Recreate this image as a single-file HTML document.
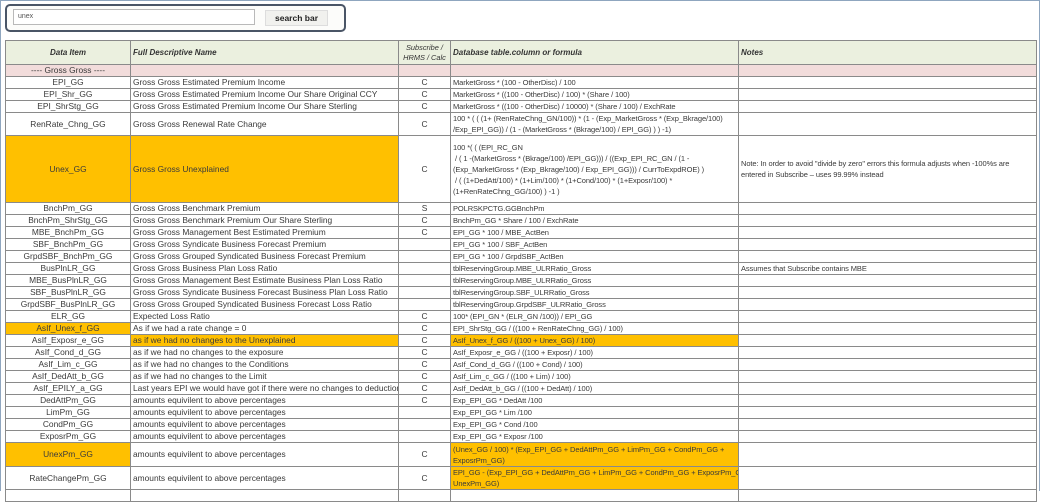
<!DOCTYPE html>
<html><head><meta charset="utf-8"><style>
*{margin:0;padding:0;box-sizing:border-box}
body{width:1040px;height:491px;overflow:hidden;background:#fff;font-family:"Liberation Sans",sans-serif;color:#3a3a3a;position:relative}
.frame{position:absolute;left:0;top:0;width:1040px;height:491px;border:1px solid #8fa6bf;border-bottom:none}
.sb{position:absolute;left:5px;top:4px;width:341px;height:28px;border:2px solid #4a5566;border-radius:5px;background:#fcfcfa}
.inp{position:absolute;left:6px;top:3px;width:242px;height:16px;border:1px solid #b9b9b9;background:#fff;font-size:7px;padding:3px 4px;color:#555}
.btn{position:absolute;left:258px;top:4px;width:63px;height:16px;background:#f1f1ee;border:1px solid #ddd;font-size:8.5px;font-weight:bold;text-align:center;line-height:14px;color:#222}
table{position:absolute;left:5px;top:40px;width:1031px;border-collapse:collapse;table-layout:fixed;font-size:8.4px}
td{border:1px solid #8a8a8a;padding:0 2px;vertical-align:middle;white-space:nowrap;overflow:hidden;height:12px;line-height:11px}
td.c{text-align:center}
td.f{font-size:7.5px;letter-spacing:-0.1px}
tr.h td{background:#ebf0df;font-weight:bold;font-style:italic;height:24px;color:#333;font-size:8px}
tr.g td{background:#f2dcdb}
.o{background:#ffc000}
td.w{line-height:11px}
</style></head><body>
<div class="frame"></div>
<div class="sb"><div class="inp">unex</div><div class="btn">search bar</div></div>
<table>
<colgroup><col style="width:125px"><col style="width:268px"><col style="width:52px"><col style="width:288px"><col style="width:298px"></colgroup>
<tr class="h"><td class="c">Data Item</td><td>Full Descriptive Name</td><td class="c" style="font-weight:normal;line-height:10px;font-size:7.4px">Subscribe /<br>HRMS / Calc</td><td>Database table.column or formula</td><td>Notes</td></tr>
<tr class="g"><td class="c">---- Gross Gross ----</td><td></td><td></td><td></td><td></td></tr>
<tr><td class="c">EPI_GG</td><td>Gross Gross Estimated Premium Income</td><td class="c">C</td><td class="f">MarketGross * (100 - OtherDisc)  / 100</td><td></td></tr>
<tr><td class="c">EPI_Shr_GG</td><td>Gross Gross Estimated Premium Income Our Share Original CCY</td><td class="c">C</td><td class="f">MarketGross * ((100 - OtherDisc) / 100) * (Share / 100)</td><td></td></tr>
<tr><td class="c">EPI_ShrStg_GG</td><td>Gross Gross Estimated Premium Income Our Share Sterling</td><td class="c">C</td><td class="f">MarketGross * ((100 - OtherDisc) / 10000) * (Share / 100) / ExchRate</td><td></td></tr>
<tr><td class="c" style="height:23px">RenRate_Chng_GG</td><td>Gross Gross Renewal Rate Change</td><td class="c">C</td><td class="f w">100 * ( ( (1+ (RenRateChng_GN/100)) * (1 - (Exp_MarketGross * (Exp_Bkrage/100)<br>/Exp_EPI_GG)) / (1 - (MarketGross * (Bkrage/100) / EPI_GG) ) ) -1)</td><td></td></tr>
<tr><td class="c o" style="height:67px">Unex_GG</td><td class="o">Gross Gross Unexplained</td><td class="c">C</td><td class="f w">100 *( ( (EPI_RC_GN<br>&nbsp;/ ( 1 -(MarketGross * (Bkrage/100) /EPI_GG))) / ((Exp_EPI_RC_GN / (1 -<br>(Exp_MarketGross * (Exp_Bkrage/100) / Exp_EPI_GG))) / CurrToExpdROE) )<br>&nbsp;/ ( (1+DedAtt/100) * (1+Lim/100) * (1+Cond/100) * (1+Exposr/100) *<br>(1+RenRateChng_GG/100) )  -1 )</td><td class="f w">Note: In order to avoid "divide by zero" errors this formula adjusts when -100%s are<br>entered in Subscribe – uses 99.99% instead</td></tr>
<tr><td class="c">BnchPm_GG</td><td>Gross Gross Benchmark Premium</td><td class="c">S</td><td class="f">POLRSKPCTG.GGBnchPm</td><td></td></tr>
<tr><td class="c">BnchPm_ShrStg_GG</td><td>Gross Gross Benchmark Premium Our Share Sterling</td><td class="c">C</td><td class="f">BnchPm_GG * Share / 100 / ExchRate</td><td></td></tr>
<tr><td class="c">MBE_BnchPm_GG</td><td>Gross Gross Management Best Estimated Premium</td><td class="c">C</td><td class="f">EPI_GG * 100 / MBE_ActBen</td><td></td></tr>
<tr><td class="c">SBF_BnchPm_GG</td><td>Gross Gross Syndicate Business Forecast Premium</td><td></td><td class="f">EPI_GG * 100 / SBF_ActBen</td><td></td></tr>
<tr><td class="c">GrpdSBF_BnchPm_GG</td><td>Gross Gross Grouped Syndicated Business Forecast Premium</td><td></td><td class="f">EPI_GG * 100 / GrpdSBF_ActBen</td><td></td></tr>
<tr><td class="c">BusPlnLR_GG</td><td>Gross Gross Business Plan Loss Ratio</td><td></td><td class="f">tblReservingGroup.MBE_ULRRatio_Gross</td><td class="f">Assumes that Subscribe contains MBE</td></tr>
<tr><td class="c">MBE_BusPlnLR_GG</td><td>Gross Gross Management Best Estimate Business Plan Loss Ratio</td><td></td><td class="f">tblReservingGroup.MBE_ULRRatio_Gross</td><td></td></tr>
<tr><td class="c">SBF_BusPlnLR_GG</td><td>Gross Gross Syndicate Business Forecast Business Plan Loss Ratio</td><td></td><td class="f">tblReservingGroup.SBF_ULRRatio_Gross</td><td></td></tr>
<tr><td class="c">GrpdSBF_BusPlnLR_GG</td><td>Gross Gross Grouped Syndicated Business Forecast Loss Ratio</td><td></td><td class="f">tblReservingGroup.GrpdSBF_ULRRatio_Gross</td><td></td></tr>
<tr><td class="c">ELR_GG</td><td>Expected Loss Ratio</td><td class="c">C</td><td class="f">100* (EPI_GN * (ELR_GN /100)) / EPI_GG</td><td></td></tr>
<tr><td class="c o">AsIf_Unex_f_GG</td><td>As if we had a rate change = 0</td><td class="c">C</td><td class="f">EPI_ShrStg_GG /  ((100 + RenRateChng_GG) / 100)</td><td></td></tr>
<tr><td class="c">AsIf_Exposr_e_GG</td><td class="o">as if we had no changes to the Unexplained</td><td class="c">C</td><td class="f o">AsIf_Unex_f_GG / ((100 + Unex_GG) / 100)</td><td></td></tr>
<tr><td class="c">AsIf_Cond_d_GG</td><td>as if we had no changes to the exposure</td><td class="c">C</td><td class="f">AsIf_Exposr_e_GG / ((100 + Exposr) / 100)</td><td></td></tr>
<tr><td class="c">AsIf_Lim_c_GG</td><td>as if we had no changes to the Conditions</td><td class="c">C</td><td class="f">AsIf_Cond_d_GG / ((100 + Cond) / 100)</td><td></td></tr>
<tr><td class="c">AsIf_DedAtt_b_GG</td><td>as if we had no changes to the Limit</td><td class="c">C</td><td class="f">AsIf_Lim_c_GG  / ((100 + Lim) / 100)</td><td></td></tr>
<tr><td class="c">AsIf_EPILY_a_GG</td><td>Last years EPI we would have got if there were no changes to deductions or attachments</td><td class="c">C</td><td class="f">AsIf_DedAtt_b_GG / ((100 + DedAtt) / 100)</td><td></td></tr>
<tr><td class="c">DedAttPm_GG</td><td>amounts equivilent to above percentages</td><td class="c">C</td><td class="f">Exp_EPI_GG * DedAtt /100</td><td></td></tr>
<tr><td class="c">LimPm_GG</td><td>amounts equivilent to above percentages</td><td></td><td class="f">Exp_EPI_GG * Lim /100</td><td></td></tr>
<tr><td class="c">CondPm_GG</td><td>amounts equivilent to above percentages</td><td></td><td class="f">Exp_EPI_GG * Cond /100</td><td></td></tr>
<tr><td class="c">ExposrPm_GG</td><td>amounts equivilent to above percentages</td><td></td><td class="f">Exp_EPI_GG * Exposr /100</td><td></td></tr>
<tr><td class="c o" style="height:24px">UnexPm_GG</td><td>amounts equivilent to above percentages</td><td class="c">C</td><td class="f o w">(Unex_GG / 100) * (Exp_EPI_GG + DedAttPm_GG + LimPm_GG + CondPm_GG +<br>ExposrPm_GG)</td><td></td></tr>
<tr><td class="c" style="height:23px">RateChangePm_GG</td><td>amounts equivilent to above percentages</td><td class="c">C</td><td class="f o w">EPI_GG - (Exp_EPI_GG + DedAttPm_GG + LimPm_GG + CondPm_GG + ExposrPm_GG +<br>UnexPm_GG)</td><td></td></tr>
<tr><td></td><td></td><td></td><td></td><td></td></tr>
</table>
</body></html>
